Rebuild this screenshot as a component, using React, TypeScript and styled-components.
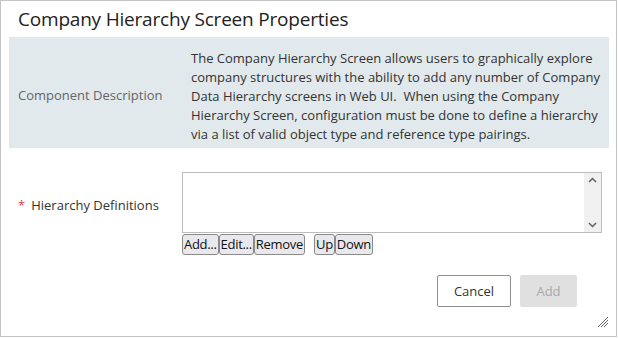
import React from "react";
import styled, { createGlobalStyle } from "styled-components";

const Global = createGlobalStyle`
  html, body { margin: 0; padding: 0; background: #fff; }
  body { font-family: "Open Sans", "Noto Sans", sans-serif; }
  * { box-sizing: border-box; }
`;

const Dialog = styled.div`
  width: 617px;
  height: 337px;
  border: 1px solid #c4c4c4;
  display: flex;
  flex-direction: column;
  position: relative;
  background: #fff;
`;

const Title = styled.h1`
  margin: 0;
  padding: 5px 0 0 17px;
  height: 36px;
  font-size: 19px;
  font-weight: 400;
  color: #222;
  letter-spacing: -0.2px;
`;

const Panel = styled.div`
  margin: 0 7px 0 8px;
  background: #e1e9ec;
  display: grid;
  grid-template-columns: 173px 1fr;
  align-items: center;
  padding: 9px 0 4px 9px;
`;

const Label = styled.div<{ $muted?: boolean }>`
  font-size: 13px;
  color: ${(p) => (p.$muted ? "#666" : "#333")};
  display: flex;
  align-items: center;
  gap: 6px;
`;

const Required = styled.span`
  color: #d9434f;
  font-size: 13px;
`;

const Description = styled.div`
  font-size: 13px;
  line-height: 19px;
  color: #333;
  padding: 3px 8px 0 0;
`;

const FieldRow = styled.div`
  margin: 24px 0 0 17px;
  display: grid;
  grid-template-columns: 164px 420px;
  align-items: start;
`;

const FieldLabel = styled(Label)`
  height: 60px;
  padding-top: 6px;
`;

const ListBox = styled.div`
  height: 61px;
  border: 1px solid #bcbcbc;
  display: flex;
  justify-content: flex-end;
`;

const Scroll = styled.div`
  width: 17px;
  background: #f0f0f0;
  display: flex;
  flex-direction: column;
  justify-content: space-between;
  align-items: center;
  padding: 4px 0;
`;

const ButtonRow = styled.div`
  grid-column: 2;
  display: flex;
  margin-top: 1px;
`;

const SmallButton = styled.button<{ $gap?: boolean }>`
  font-family: "Open Sans", sans-serif;
  font-size: 13px;
  height: 21px;
  padding: 0 1px;
  margin-left: ${(p) => (p.$gap ? "9px" : "0")};
  border: 1px solid #8a8a8a;
  border-radius: 3px;
  background: #e9e9ed;
  color: #111;
  line-height: 17px;
  letter-spacing: -0.3px;
`;

const Footer = styled.div`
  display: flex;
  justify-content: flex-end;
  gap: 9px;
  padding: 20px 39px 0 0;
`;

const FooterButton = styled.button<{ $disabled?: boolean }>`
  font-family: "Open Sans", sans-serif;
  font-size: 13px;
  height: 32px;
  width: ${(p) => (p.$disabled ? "57px" : "74px")};
  border: 1px solid ${(p) => (p.$disabled ? "#e0e0e0" : "#8f8f8f")};
  background: ${(p) => (p.$disabled ? "#e0e0e0" : "#fff")};
  color: ${(p) => (p.$disabled ? "#a8a8a8" : "#333")};
  border-radius: 2px;
`;

const Grip = styled.svg`
  position: absolute;
  right: 7px;
  bottom: 8px;
`;

const Chevron = ({ up }: { up?: boolean }) => (
  <svg width="9" height="6" viewBox="0 0 9 6">
    <path
      d={up ? "M1 5 L4.5 1.5 L8 5" : "M1 1 L4.5 4.5 L8 1"}
      fill="none"
      stroke="#606060"
      strokeWidth="1.5"
    />
  </svg>
);

export default function App() {
  return (
    <>
      <Global />
      <Dialog>
        <Title>Company Hierarchy Screen Properties</Title>
        <Panel>
          <Label $muted>Component Description</Label>
          <Description>
            The Company Hierarchy Screen allows users to graphically explore company structures with the
            ability to add any number of Company Data Hierarchy screens in Web UI.&nbsp; When using the
            Company Hierarchy Screen, configuration must be done to define a hierarchy via a list of valid
            object type and reference type pairings.
          </Description>
        </Panel>
        <FieldRow>
          <FieldLabel>
            <Required>*</Required>
            Hierarchy Definitions
          </FieldLabel>
          <ListBox>
            <Scroll>
              <Chevron up />
              <Chevron />
            </Scroll>
          </ListBox>
          <ButtonRow>
            <SmallButton>Add...</SmallButton>
            <SmallButton>Edit...</SmallButton>
            <SmallButton>Remove</SmallButton>
            <SmallButton $gap>Up</SmallButton>
            <SmallButton>Down</SmallButton>
          </ButtonRow>
        </FieldRow>
        <Footer>
          <FooterButton>Cancel</FooterButton>
          <FooterButton $disabled disabled>
            Add
          </FooterButton>
        </Footer>
        <Grip width="12" height="12" viewBox="0 0 12 12">
          <path d="M11 4 L4 11 M11 7 L7 11 M11 1 L1 11" stroke="#666" strokeWidth="1" />
        </Grip>
      </Dialog>
    </>
  );
}
